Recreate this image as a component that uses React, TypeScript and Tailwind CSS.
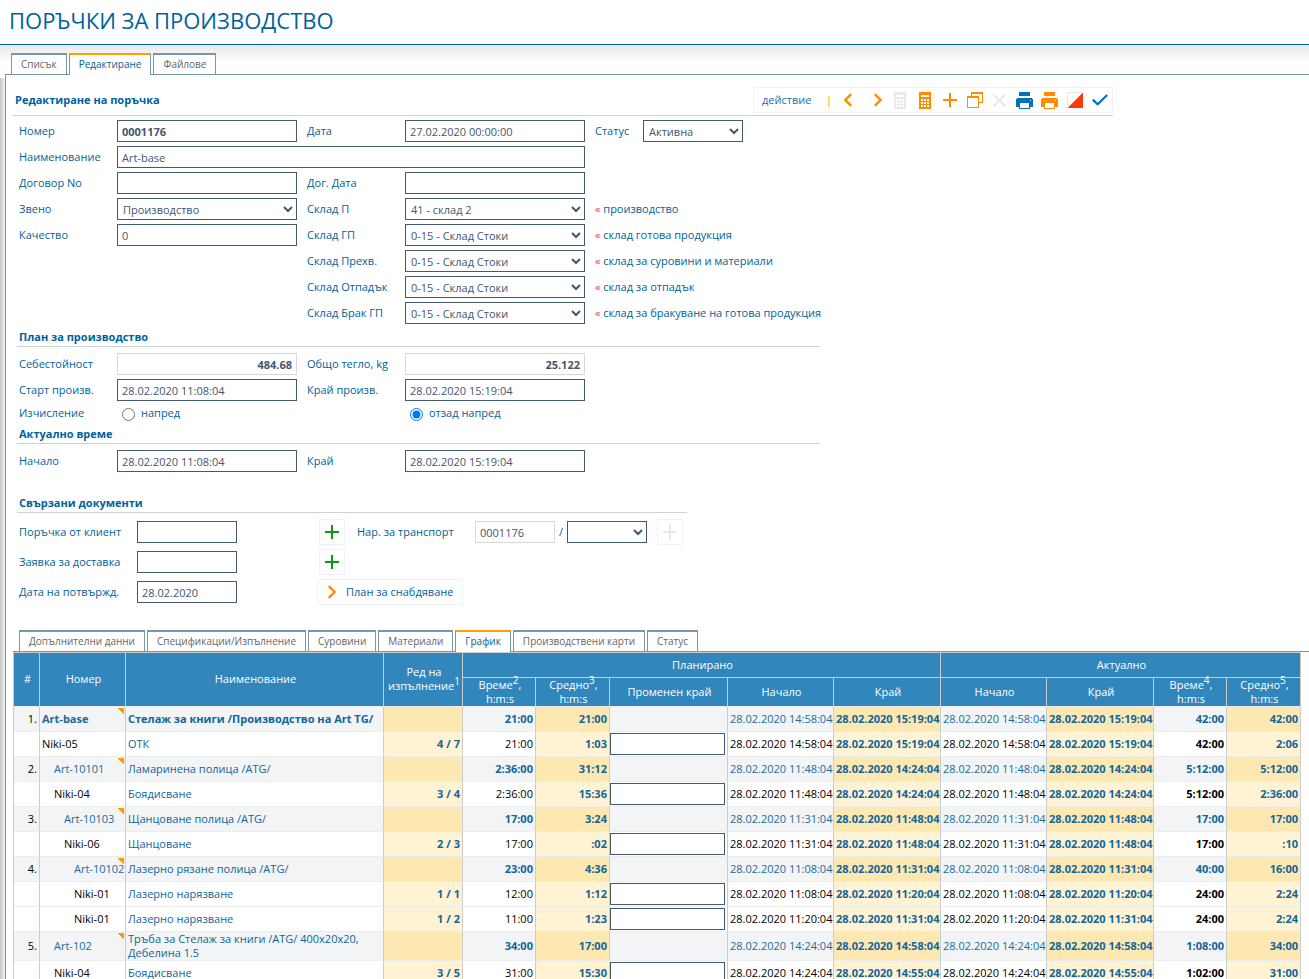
import { useState } from "react";
import type { ReactNode } from "react";
import { clsx } from "clsx";

const INPUT =
  "h-[22px] rounded-none border border-[#435871] bg-white px-1 pt-px text-[11px] text-[#43566e] outline-none";
const READONLY =
  "h-[22px] rounded-none border border-[#d8d8d8] bg-white px-1 pt-px text-[11px] text-[#43566e] outline-none";
const SELECT =
  "h-[22px] rounded-none border border-[#435871] bg-white pl-px pt-px text-[11px] text-[#43566e] outline-none";

const WAREHOUSES = ["41 - склад 2", "0-15 - Склад Стоки"];

const storeRows = [
  { id: "store-gp", label: "Склад ГП", note: "склад готова продукция" },
  { id: "store-transfer", label: "Склад Прехв.", note: "склад за суровини и материали" },
  { id: "store-waste", label: "Склад Отпадък", note: "склад за отпадък" },
  { id: "store-scrap", label: "Склад Брак ГП", note: "склад за бракуване на готова продукция" },
];

type Row = {
  n?: string;
  code: string;
  indent: 0 | 1 | 2 | 3;
  name: string;
  order?: string;
  time: string;
  avg: string;
  start: string;
  end: string;
  aTime: string;
  aAvg: string;
  top?: boolean;
};

const rows: Row[] = [
  { n: "1.", code: "Art-base", indent: 0, name: "Стелаж за книги /Производство на Art TG/", time: "21:00", avg: "21:00", start: "14:58:04", end: "15:19:04", aTime: "42:00", aAvg: "42:00", top: true },
  { code: "Niki-05", indent: 0, name: "ОТК", order: "4 / 7", time: "21:00", avg: "1:03", start: "14:58:04", end: "15:19:04", aTime: "42:00", aAvg: "2:06" },
  { n: "2.", code: "Art-10101", indent: 1, name: "Ламаринена полица /ATG/", time: "2:36:00", avg: "31:12", start: "11:48:04", end: "14:24:04", aTime: "5:12:00", aAvg: "5:12:00" },
  { code: "Niki-04", indent: 1, name: "Боядисване", order: "3 / 4", time: "2:36:00", avg: "15:36", start: "11:48:04", end: "14:24:04", aTime: "5:12:00", aAvg: "2:36:00" },
  { n: "3.", code: "Art-10103", indent: 2, name: "Щанцоване полица /ATG/", time: "17:00", avg: "3:24", start: "11:31:04", end: "11:48:04", aTime: "17:00", aAvg: "17:00" },
  { code: "Niki-06", indent: 2, name: "Щанцоване", order: "2 / 3", time: "17:00", avg: ":02", start: "11:31:04", end: "11:48:04", aTime: "17:00", aAvg: ":10" },
  { n: "4.", code: "Art-10102", indent: 3, name: "Лазерно рязане полица /ATG/", time: "23:00", avg: "4:36", start: "11:08:04", end: "11:31:04", aTime: "40:00", aAvg: "16:00" },
  { code: "Niki-01", indent: 3, name: "Лазерно нарязване", order: "1 / 1", time: "12:00", avg: "1:12", start: "11:08:04", end: "11:20:04", aTime: "24:00", aAvg: "2:24" },
  { code: "Niki-01", indent: 3, name: "Лазерно нарязване", order: "1 / 2", time: "11:00", avg: "1:23", start: "11:20:04", end: "11:31:04", aTime: "24:00", aAvg: "2:24" },
  { n: "5.", code: "Art-102", indent: 1, name: "Тръба за Стелаж за книги /ATG/ 400x20x20, Дебелина 1.5", time: "34:00", avg: "17:00", start: "14:24:04", end: "14:58:04", aTime: "1:08:00", aAvg: "34:00" },
  { code: "Niki-04", indent: 1, name: "Боядисване", order: "3 / 5", time: "31:00", avg: "15:30", start: "14:24:04", end: "14:55:04", aTime: "1:02:00", aAvg: "31:00" },
];

const INDENT = ["pl-[2px]", "pl-[14px]", "pl-[24px]", "pl-[34px]"];

/* ---------- icons ---------- */

function Chevron({ dir }: { dir: "left" | "right" }) {
  return (
    <svg width="10" height="14" viewBox="0 0 10 14" fill="none" stroke="#ff8c00" strokeWidth="2.4" aria-hidden="true">
      <path d={dir === "left" ? "M8.2 1.2 2.4 7l5.8 5.8" : "M1.8 1.2 7.6 7l-5.8 5.8"} />
    </svg>
  );
}

function Calc({ color }: { color: string }) {
  return (
    <svg width="12" height="17" viewBox="0 0 12 17" shapeRendering="crispEdges" aria-hidden="true">
      <path fill={color} d="M0 0h12v17H0z" />
      <path fill="#fff" d="M2 3h8v2H2zM2 7h2v2H2zM5 7h2v2H5zM8 7h2v2H8zM2 10h2v2H2zM5 10h2v2H5zM8 10h2v2H8zM2 13h2v2H2zM5 13h2v2H5zM8 13h2v2H8z" />
    </svg>
  );
}

function Plus({ color }: { color: string }) {
  return (
    <svg width="14" height="14" viewBox="0 0 14 14" fill={color} shapeRendering="crispEdges" aria-hidden="true">
      <path d="M6 0h2v6h6v2H8v6H6V8H0V6h6z" />
    </svg>
  );
}

function Windows() {
  return (
    <svg width="16" height="16" viewBox="0 0 16 16" fill="#ff8c00" shapeRendering="crispEdges" aria-hidden="true">
      <path d="M4 0h12v11h-4v-1h3V2H5v2H4z" />
      <path d="M0 4h12v12H0zM1 6v9h10V6z" fillRule="evenodd" />
    </svg>
  );
}

function Cross() {
  return (
    <svg width="13" height="13" viewBox="0 0 13 13" fill="none" stroke="#e8e8ee" strokeWidth="2.2" aria-hidden="true">
      <path d="m.7.7 11.6 11.6M12.3.7.7 12.3" />
    </svg>
  );
}

function Printer({ color }: { color: string }) {
  return (
    <svg width="17" height="17" viewBox="0 0 17 17" shapeRendering="crispEdges" aria-hidden="true">
      <path fill={color} d="M3 0h11v4H3zM1 6h15v1h1v8H0V7h1z" />
      <path fill="#fff" d="M14 8h1v1h-1zM3 10h11v5H3z" />
      <path fill={color} fillRule="evenodd" d="M3 10h11v7H3zM4 11v5h9v-5z" />
    </svg>
  );
}

function Corner() {
  return (
    <svg width="16" height="16" viewBox="0 0 16 16" aria-hidden="true">
      <path fill="none" stroke="#e4e6ec" d="M.5 15.500V.5h15" />
      <path fill="#ff3800" d="M16 .5V16H.5z" />
    </svg>
  );
}

function Check() {
  return (
    <svg width="16" height="12" viewBox="0 0 16 12" fill="none" stroke="#0072bc" strokeWidth="2.2" aria-hidden="true">
      <path d="m.8 5.600 4.900 4.700L15.200 1" />
    </svg>
  );
}

/* ---------- small parts ---------- */

function Tabs({ items, active, onSelect }: { items: string[]; active: string; onSelect: (t: string) => void }) {
  return (
    <div role="tablist" className="flex gap-[2px] text-[10px]">
      {items.map((t) => (
        <button
          key={t}
          type="button"
          role="tab"
          aria-selected={t === active}
          onClick={() => onSelect(t)}
          className={clsx(
            "relative h-[21px] border border-b-0 border-t-2 border-[#7699aa] bg-white px-[9px] pb-px leading-[18px] whitespace-nowrap",
            t === active
              ? "border-t-[#ffa000] text-[#00629b] after:absolute after:inset-x-0 after:top-full after:h-px after:bg-white"
              : "text-[#666]",
          )}
        >
          {t}
        </button>
      ))}
    </div>
  );
}

function Heading({ children, className }: { children: ReactNode; className?: string }) {
  return (
    <h3 className={clsx("border-b border-[#d0d0d0] px-[2px] font-bold leading-[18px]", className)}>{children}</h3>
  );
}

function Select({ id, value, options, className }: { id: string; value: string; options: string[]; className: string }) {
  return (
    <select id={id} defaultValue={value} className={clsx(SELECT, className)}>
      {options.map((o) => (
        <option key={o}>{o}</option>
      ))}
    </select>
  );
}

function Note({ children }: { children: ReactNode }) {
  return (
    <span className="whitespace-nowrap">
      <span className="text-[#ff3048]">«</span> {children}
    </span>
  );
}

function IconButton({ label, children }: { label: string; children: ReactNode }) {
  return (
    <button type="button" aria-label={label} className="flex h-6 w-[25px] items-center justify-center">
      {children}
    </button>
  );
}

function AddButton({ label, color }: { label: string; color: string }) {
  return (
    <button
      type="button"
      aria-label={label}
      className="flex size-[26px] items-center justify-center border border-[#edf3f7]"
    >
      <Plus color={color} />
    </button>
  );
}

function Toolbar() {
  return (
    <div className="flex h-[26px] w-[360px] items-center border border-[#edf3f7] pl-2">
      <button type="button" className="w-16 text-left text-[#1e6e9f]">
        действие
      </button>
      <span className="text-[#ff8c00]">|</span>
      <div className="ml-auto flex items-center">
        <button type="button" aria-label="Предишна" className="mr-[14px] flex w-4 justify-center">
          <Chevron dir="left" />
        </button>
        <button type="button" aria-label="Следваща" className="mr-px flex w-4 justify-center">
          <Chevron dir="right" />
        </button>
        <IconButton label="Калкулация"><Calc color="#e8e8ee" /></IconButton>
        <IconButton label="Преизчисли"><Calc color="#ff8c00" /></IconButton>
        <IconButton label="Нова"><Plus color="#ff8c00" /></IconButton>
        <IconButton label="Копирай"><Windows /></IconButton>
        <IconButton label="Изтрий"><Cross /></IconButton>
        <IconButton label="Печат"><Printer color="#0072bc" /></IconButton>
        <IconButton label="Печат на форма"><Printer color="#ff8c00" /></IconButton>
        <IconButton label="Приключи"><Corner /></IconButton>
        <IconButton label="Запис"><Check /></IconButton>
      </div>
    </div>
  );
}

/* ---------- schedule table ---------- */

const TH = "border-r border-[#ccc] py-0 pl-[2px] pr-0 text-center align-middle font-normal";
const TD = "border-r border-t border-r-[#ccc] border-t-[#ececec] px-[2px] py-0";

function ScheduleRow({ row }: { row: Row }) {
  const head = row.n !== undefined;
  const yellow = head ? "bg-[#fde8b2]" : "bg-[#fff3d3]";
  const date = head ? "text-[#1a6b9c]" : "text-black";

  return (
    <tr className={clsx("h-[25px]", head ? "bg-[#f2f4f5]" : "bg-white")}>
      <td className={clsx(TD, "text-right text-black")}>{row.n}</td>
      <td
        className={clsx(
          "relative border-r border-t border-r-[#ccc] border-t-[#ececec] py-0 whitespace-nowrap",
          INDENT[row.indent],
          row.top && "font-bold",
          head ? "text-[#1a6b9c]" : "text-black",
        )}
      >
        {row.code}
        {head && (
          <svg width="6" height="6" viewBox="0 0 6 6" shapeRendering="crispEdges" className="absolute right-px top-px" aria-hidden="true">
            <path fill="#ff9900" d="M0 0h6v6H5V5H4V4H3V3H2V2H1V1H0z" />
          </svg>
        )}
      </td>
      <td className={clsx(TD, row.top && "font-bold")}>{row.name}</td>
      <td className={clsx(TD, yellow, "text-right font-bold")}>{row.order}</td>
      <td className={clsx(TD, "text-right", head ? "font-bold" : "text-black")}>{row.time}</td>
      <td className={clsx(TD, yellow, "text-right font-bold")}>{row.avg}</td>
      <td className="border-r border-t border-r-[#ccc] border-t-[#ececec] p-0">
        {!head && <input aria-label="Променен край" className={clsx(INPUT, "block w-[115px]")} />}
      </td>
      <td className={clsx(TD, date, "whitespace-nowrap")}>28.02.2020 {row.start}</td>
      <td className={clsx(TD, yellow, "font-bold whitespace-nowrap")}>28.02.2020 {row.end}</td>
      <td className={clsx(TD, date, "whitespace-nowrap")}>28.02.2020 {row.start}</td>
      <td className={clsx(TD, yellow, "font-bold whitespace-nowrap")}>28.02.2020 {row.end}</td>
      <td className={clsx(TD, "text-right font-bold", !head && "text-black")}>{row.aTime}</td>
      <td className={clsx(TD, yellow, "text-right font-bold")}>{row.aAvg}</td>
    </tr>
  );
}

function Unit({ name, note }: { name: string; note: string }) {
  return (
    <>
      {name}
      <sup className="text-[10px]">{note}</sup>,<br />
      h:m:s
    </>
  );
}

function Schedule() {
  return (
    <table className="w-full min-w-[1200px] table-fixed border-separate border-spacing-0 border-l border-t border-[#ccc] leading-[14px] text-[#10659a]">
      <colgroup>
        <col className="w-[26px]" />
        <col className="w-[86px]" />
        <col />
        <col className="w-[79px]" />
        <col className="w-[73px]" />
        <col className="w-[74px]" />
        <col className="w-[118px]" />
        <col className="w-[106px]" />
        <col className="w-[107px]" />
        <col className="w-[106px]" />
        <col className="w-[107px]" />
        <col className="w-[73px]" />
        <col className="w-[74px]" />
      </colgroup>
      <thead className="bg-[#3186bc] text-white">
        <tr className="h-[25px]">
          <th rowSpan={2} className={clsx(TH, "pb-[2px]")}>#</th>
          <th rowSpan={2} className={clsx(TH, "pb-[2px]")}>Номер</th>
          <th rowSpan={2} className={clsx(TH, "pb-[2px]")}>Наименование</th>
          <th rowSpan={2} className={clsx(TH, "pb-[2px]")}>
            Ред на изпълнение<sup className="text-[10px]">1</sup>
          </th>
          <th colSpan={5} className={clsx(TH, "border-b")}>Планирано</th>
          <th colSpan={4} className={clsx(TH, "border-b")}>Актуално</th>
        </tr>
        <tr className="h-7">
          <th className={TH}><Unit name="Време" note="2" /></th>
          <th className={TH}><Unit name="Средно" note="3" /></th>
          <th className={TH}>Променен край</th>
          <th className={TH}>Начало</th>
          <th className={TH}>Край</th>
          <th className={TH}>Начало</th>
          <th className={TH}>Край</th>
          <th className={TH}><Unit name="Време" note="4" /></th>
          <th className={TH}><Unit name="Средно" note="5" /></th>
        </tr>
      </thead>
      <tbody>
        {rows.map((row, i) => (
          <ScheduleRow key={i} row={row} />
        ))}
      </tbody>
    </table>
  );
}

/* ---------- page ---------- */

export default function App() {
  const [page, setPage] = useState("Редактиране");
  const [section, setSection] = useState("График");

  return (
    <div className="flex h-screen flex-col overflow-auto bg-white font-['Open_Sans',sans-serif] text-[11px] leading-[14px] text-[#00629b] [scrollbar-width:none]">
      <header className="flex h-[45px] shrink-0 items-center border-b border-[#00629b] px-[9px] pb-1">
        <h1 className="text-[22px] leading-7">ПОРЪЧКИ ЗА ПРОИЗВОДСТВО</h1>
      </header>

      <div className="h-[29px] shrink-0 bg-linear-to-b from-[#e8e8e8] to-white to-60% pl-[11px] pt-2">
        <Tabs items={["Списък", "Редактиране", "Файлове"]} active={page} onSelect={setPage} />
      </div>

      <div className="flex grow">
        <div aria-hidden="true" className="mt-1 w-[5px] shrink-0 bg-linear-to-r from-[#c6c6c6] to-[#f4f4f4]" />
        <main className="min-w-0 grow border-l border-t border-[#7699aa] pl-[7px]">
          <div className="flex w-full max-w-[1100px] items-center justify-between border-b border-[#d0d0d0] pb-[2px] pt-3">
            <h2 className="pl-[2px] font-bold">Редактиране на поръчка</h2>
            <Toolbar />
          </div>

          <form className="pl-1">
            <div className="grid auto-rows-[22px] grid-cols-[98px_190px_98px_190px_auto] items-center gap-y-1 pl-[2px] pt-1">
              <label htmlFor="number">Номер</label>
              <input id="number" defaultValue="0001176" className={clsx(INPUT, "w-[180px] font-bold")} />
              <label htmlFor="date">Дата</label>
              <input id="date" defaultValue="27.02.2020 00:00:00" className={clsx(INPUT, "w-[180px]")} />
              <div className="flex items-center">
                <label htmlFor="status" className="w-12">Статус</label>
                <Select id="status" value="Активна" options={["Активна"]} className="w-[100px]" />
              </div>

              <label htmlFor="name">Наименование</label>
              <input id="name" defaultValue="Art-base" className={clsx(INPUT, "col-span-4 w-[468px]")} />

              <label htmlFor="contract">Договор No</label>
              <input id="contract" className={clsx(INPUT, "w-[180px]")} />
              <label htmlFor="contract-date">Дог. Дата</label>
              <input id="contract-date" className={clsx(INPUT, "w-[180px]")} />
              <span />

              <label htmlFor="unit">Звено</label>
              <Select id="unit" value="Производство" options={["Производство"]} className="w-[180px]" />
              <label htmlFor="store-p">Склад П</label>
              <Select id="store-p" value={WAREHOUSES[0]} options={WAREHOUSES} className="w-[180px]" />
              <Note>производство</Note>

              <label htmlFor="quality">Качество</label>
              <input id="quality" defaultValue="0" className={clsx(INPUT, "w-[180px]")} />
              {storeRows.map((s) => (
                <div key={s.id} className="contents">
                  <label htmlFor={s.id} className="col-start-3">{s.label}</label>
                  <Select id={s.id} value={WAREHOUSES[1]} options={WAREHOUSES} className="w-[180px]" />
                  <Note>{s.note}</Note>
                </div>
              ))}
            </div>

            <Heading className="mt-1 max-w-[803px]">План за производство</Heading>
            <div className="grid grid-cols-[98px_190px_98px_190px] items-center gap-y-1 pl-[2px] pt-[6px]">
              <label htmlFor="cost">Себестойност</label>
              <input id="cost" readOnly value="484.68" className={clsx(READONLY, "w-[180px] text-right font-bold")} />
              <label htmlFor="weight">Общо тегло, kg</label>
              <input id="weight" readOnly value="25.122" className={clsx(READONLY, "w-[180px] text-right font-bold")} />

              <label htmlFor="plan-start">Старт произв.</label>
              <input id="plan-start" defaultValue="28.02.2020 11:08:04" className={clsx(INPUT, "w-[180px]")} />
              <label htmlFor="plan-end">Край произв.</label>
              <input id="plan-end" defaultValue="28.02.2020 15:19:04" className={clsx(INPUT, "w-[180px]")} />

              <span className="pb-[2px]">Изчисление</span>
              <label className="flex h-[18px] items-center gap-[6px] pl-[5px]">
                <input type="radio" name="calc" className="size-[13px]" />
                <span className="pb-[2px]">напред</span>
              </label>
              <label className="col-start-4 flex items-center gap-[6px] pl-[5px]">
                <input type="radio" name="calc" defaultChecked className="size-[13px]" />
                <span className="pb-[2px]">отзад напред</span>
              </label>
            </div>

            <Heading className="mt-[2px] max-w-[803px]">Актуално време</Heading>
            <div className="grid grid-cols-[98px_190px_98px_190px] items-center pl-[2px] pt-[6px]">
              <label htmlFor="real-start">Начало</label>
              <input id="real-start" defaultValue="28.02.2020 11:08:04" className={clsx(INPUT, "w-[180px]")} />
              <label htmlFor="real-end">Край</label>
              <input id="real-end" defaultValue="28.02.2020 15:19:04" className={clsx(INPUT, "w-[180px]")} />
            </div>

            <Heading className="mt-[22px] max-w-[670px]">Свързани документи</Heading>
            <div className="grid auto-rows-[26px] grid-cols-[118px_180px_40px_auto] items-center gap-y-1 pl-[2px] pt-[6px]">
              <label htmlFor="client-order" className="whitespace-nowrap">Поръчка от клиент</label>
              <input id="client-order" className={clsx(INPUT, "w-[100px]")} />
              <div className="pl-[2px]"><AddButton label="Добави поръчка" color="#0a9a0a" /></div>
              <div className="flex items-center">
                <label htmlFor="transport" className="w-[118px]">Нар. за транспорт</label>
                <input id="transport" readOnly value="0001176" className={clsx(READONLY, "w-20")} />
                <span className="w-3 text-center">/</span>
                <select aria-label="Транспорт" className={clsx(SELECT, "mr-[10px] w-20")} />
                <AddButton label="Добави транспорт" color="#e8e8ee" />
              </div>

              <label htmlFor="supply" className="whitespace-nowrap">Заявка за доставка</label>
              <input id="supply" className={clsx(INPUT, "w-[100px]")} />
              <div className="pl-[2px]"><AddButton label="Добави заявка" color="#0a9a0a" /></div>
              <span />

              <label htmlFor="confirmed" className="whitespace-nowrap">Дата на потвържд.</label>
              <input id="confirmed" defaultValue="28.02.2020" className={clsx(INPUT, "w-[100px]")} />
              <button
                type="button"
                className="col-span-2 flex h-[26px] items-center gap-[9px] justify-self-start border border-[#edf3f7] px-[9px] whitespace-nowrap"
              >
                <Chevron dir="right" />
                План за снабдяване
              </button>
            </div>
          </form>

          <div className="pl-[6px] pt-[25px]">
            <Tabs
              items={[
                "Допълнителни данни",
                "Спецификации/Изпълнение",
                "Суровини",
                "Материали",
                "График",
                "Производствени карти",
                "Статус",
              ]}
              active={section}
              onSelect={setSection}
            />
          </div>
          <div className="border-t border-[#7699aa] pr-2">
            <Schedule />
          </div>
        </main>
      </div>
    </div>
  );
}
